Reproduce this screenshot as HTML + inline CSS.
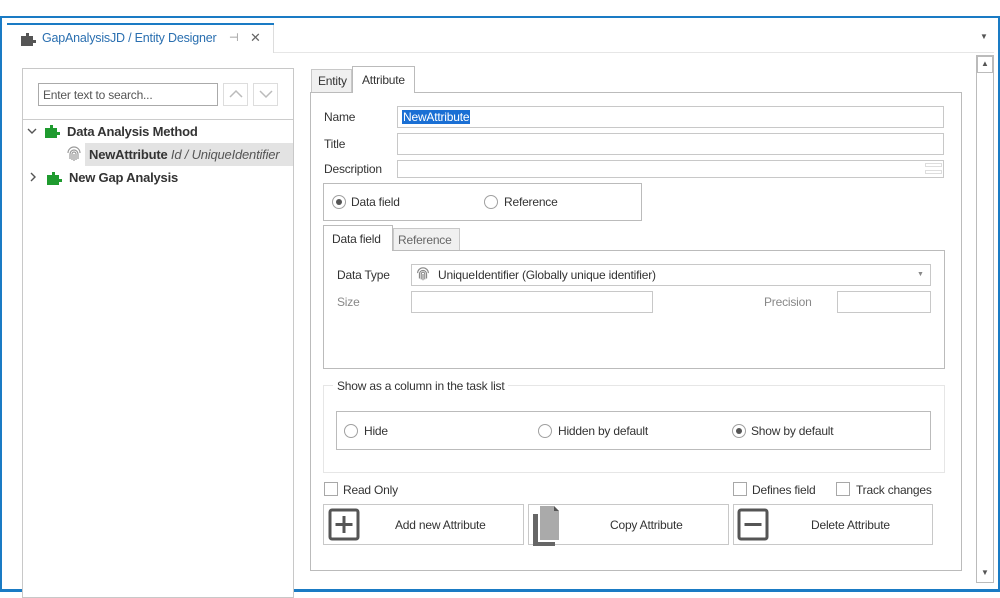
<!DOCTYPE html>
<html><head><meta charset="utf-8"><style>
*{box-sizing:border-box;margin:0;padding:0}
body{width:1000px;height:592px;background:#fff;position:relative;overflow:hidden;font-family:"Liberation Sans",sans-serif;font-size:12px;color:#333}
.a{position:absolute}
.bx{position:absolute;border:1px solid #c8c8c8;background:#fff}
.t{position:absolute;white-space:nowrap;letter-spacing:-0.2px}
.rad{position:absolute;width:14px;height:14px;border:1px solid #a0a0a0;border-radius:50%;background:#fff}
.rad.on::after{content:"";position:absolute;left:3px;top:3px;width:6px;height:6px;border-radius:50%;background:#555}
.chk{position:absolute;width:14px;height:14px;border:1px solid #a8a8a8;background:#fff}
.btn{position:absolute;border:1px solid #c8c8c8;background:#fff;height:41px;top:504px}
</style></head><body>
<div class="a" style="left:0;top:16px;width:1000px;height:576px;border:2px solid #1a7bc4;border-bottom-width:3px"></div>
<div class="a" style="left:7px;top:23px;width:267px;height:2px;background:#1a7bc4"></div>
<div class="a" style="left:273px;top:25px;width:1px;height:28px;background:#ddd"></div>
<div class="a" style="left:274px;top:52px;width:720px;height:1px;background:#e6e6e6"></div>
<svg class="a" style="left:20px;top:31px" width="18" height="16" viewBox="0 0 18 16"><path d="M1 5h5V2h3v3h4v4h3v3h-3v3H1z" fill="#555"/></svg>
<div class="t" style="left:42px;top:31px;color:#2a6fb0;font-size:12.5px">GapAnalysisJD / Entity Designer</div>
<div class="t" style="left:229px;top:31px;color:#888;font-size:11px">⊣</div>
<div class="t" style="left:250px;top:30px;color:#666;font-size:13px">✕</div>
<div class="t" style="left:980px;top:32px;color:#555;font-size:8px">▼</div>
<div class="bx" style="left:22px;top:68px;width:272px;height:530px"></div>
<div class="bx" style="left:38px;top:83px;width:180px;height:23px;border-color:#aaa"></div>
<div class="t" style="left:43px;top:88px;color:#555">Enter text to search...</div>
<div class="bx" style="left:223px;top:83px;width:25px;height:23px;border-color:#ddd"></div>
<div class="bx" style="left:253px;top:83px;width:25px;height:23px;border-color:#ddd"></div>
<svg class="a" style="left:228px;top:89px" width="16" height="10"><path d="M2 8l6-6 6 6" stroke="#bbb" stroke-width="1.5" fill="none"/></svg>
<svg class="a" style="left:258px;top:89px" width="16" height="10"><path d="M2 2l6 6 6-6" stroke="#bbb" stroke-width="1.5" fill="none"/></svg>
<div class="a" style="left:23px;top:119px;width:270px;height:1px;background:#ccc"></div>
<svg class="a" style="left:27px;top:126px" width="10" height="10"><path d="M1 3l4 4 4-4" stroke="#555" stroke-width="1.4" fill="none"/></svg>
<svg class="a" style="left:43px;top:123px" width="20" height="16" viewBox="0 0 18 16"><path d="M1 5h5V2h3v3h4v4h3v3h-3v3H1z" fill="#1f9b2f"/></svg>
<div class="t" style="left:67px;top:124px;font-weight:bold;color:#333;font-size:13px">Data Analysis Method</div>
<div class="a" style="left:85px;top:143px;width:208px;height:23px;background:#e3e3e3"></div>
<svg class="a" style="left:65px;top:145px" width="18" height="18" viewBox="0 0 18 18" fill="none" stroke="#999" stroke-width="1.2"><path d="M3 8a6 6 0 0 1 12 0M5 14V9a4 4 0 0 1 8 0v5M7 15V9a2 2 0 0 1 4 0v6M9 9v7"/></svg>
<div class="t" style="left:89px;top:147px;font-weight:bold;font-size:13px">NewAttribute <i style="font-weight:normal;color:#555">Id / UniqueIdentifier</i></div>
<svg class="a" style="left:28px;top:172px" width="10" height="10"><path d="M3 1l4 4-4 4" stroke="#555" stroke-width="1.4" fill="none"/></svg>
<svg class="a" style="left:45px;top:170px" width="20" height="16" viewBox="0 0 18 16"><path d="M1 5h5V2h3v3h4v4h3v3h-3v3H1z" fill="#1f9b2f"/></svg>
<div class="t" style="left:69px;top:170px;font-weight:bold;font-size:13px">New Gap Analysis</div>
<div class="bx" style="left:976px;top:55px;width:18px;height:528px;border-color:#bbb"></div>
<div class="bx" style="left:977px;top:56px;width:16px;height:17px;border-color:#bbb"></div>
<div class="t" style="left:981px;top:59px;font-size:8px;color:#555">▲</div>
<div class="t" style="left:981px;top:568px;font-size:8px;color:#555">▼</div>
<div class="bx" style="left:311px;top:69px;width:41px;height:24px;background:#f0f0f0"></div>
<div class="t" style="left:318px;top:74px">Entity</div>
<div class="bx" style="left:310px;top:92px;width:652px;height:479px;border-color:#bbb"></div>
<div class="bx" style="left:352px;top:66px;width:63px;height:27px;border-color:#bbb;border-bottom:none"></div>
<div class="t" style="left:362px;top:73px">Attribute</div>
<div class="t" style="left:324px;top:110px">Name</div>
<div class="bx" style="left:397px;top:106px;width:547px;height:22px"></div>
<div class="t" style="left:402px;top:110px;background:#1a6fd4;color:#fff;padding:0 1px">NewAttribute</div>
<div class="t" style="left:324px;top:137px">Title</div>
<div class="bx" style="left:397px;top:133px;width:547px;height:22px"></div>
<div class="t" style="left:324px;top:162px">Description</div>
<div class="bx" style="left:397px;top:160px;width:547px;height:18px"></div>
<div class="a" style="left:925px;top:163px;width:17px;height:4px;border:1px solid #ddd"></div>
<div class="a" style="left:925px;top:170px;width:17px;height:4px;border:1px solid #ddd"></div>
<div class="bx" style="left:323px;top:183px;width:319px;height:38px;border-color:#bbb"></div>
<div class="rad on" style="left:332px;top:195px"></div>
<div class="t" style="left:351px;top:195px">Data field</div>
<div class="rad" style="left:484px;top:195px"></div>
<div class="t" style="left:504px;top:195px">Reference</div>
<div class="bx" style="left:393px;top:228px;width:67px;height:23px;background:#f0f0f0"></div>
<div class="t" style="left:398px;top:233px;color:#666">Reference</div>
<div class="bx" style="left:323px;top:250px;width:622px;height:119px;border-color:#bbb"></div>
<div class="bx" style="left:323px;top:225px;width:70px;height:26px;border-color:#bbb;border-bottom:none"></div>
<div class="t" style="left:332px;top:232px">Data field</div>
<div class="t" style="left:337px;top:268px">Data Type</div>
<div class="bx" style="left:411px;top:264px;width:520px;height:22px"></div>
<svg class="a" style="left:415px;top:266px" width="16" height="16" viewBox="0 0 18 18" fill="none" stroke="#888" stroke-width="1.3"><path d="M3 8a6 6 0 0 1 12 0M5 14V9a4 4 0 0 1 8 0v5M7 15V9a2 2 0 0 1 4 0v6M9 9v7"/></svg>
<div class="t" style="left:438px;top:268px">UniqueIdentifier (Globally unique identifier)</div>
<div class="t" style="left:917px;top:271px;font-size:7px;color:#888">▼</div>
<div class="t" style="left:337px;top:295px;color:#888">Size</div>
<div class="bx" style="left:411px;top:291px;width:242px;height:22px"></div>
<div class="t" style="left:764px;top:295px;color:#888">Precision</div>
<div class="bx" style="left:837px;top:291px;width:94px;height:22px"></div>
<div class="bx" style="left:323px;top:385px;width:622px;height:88px;border-color:#e6e6e6"></div>
<div class="t" style="left:333px;top:379px;background:#fff;padding:0 4px">Show as a column in the task list</div>
<div class="bx" style="left:336px;top:411px;width:595px;height:39px;border-color:#bbb"></div>
<div class="rad" style="left:344px;top:424px"></div>
<div class="t" style="left:364px;top:424px">Hide</div>
<div class="rad" style="left:538px;top:424px"></div>
<div class="t" style="left:558px;top:424px">Hidden by default</div>
<div class="rad on" style="left:732px;top:424px"></div>
<div class="t" style="left:751px;top:424px">Show by default</div>
<div class="chk" style="left:324px;top:482px"></div>
<div class="t" style="left:343px;top:483px">Read Only</div>
<div class="chk" style="left:733px;top:482px"></div>
<div class="t" style="left:752px;top:483px">Defines field</div>
<div class="chk" style="left:836px;top:482px"></div>
<div class="t" style="left:856px;top:483px">Track changes</div>
<div class="btn" style="left:323px;width:201px"></div>
<svg class="a" style="left:328px;top:508px" width="34" height="34"><rect x="2" y="2" width="28" height="29" rx="2" fill="none" stroke="#555" stroke-width="3"/><path d="M16 8v17M7.5 16.5h17" stroke="#555" stroke-width="3"/></svg>
<div class="t" style="left:395px;top:518px">Add new Attribute</div>
<div class="btn" style="left:528px;width:201px"></div>
<svg class="a" style="left:531px;top:506px" width="40" height="40"><path d="M2 8v32h22v-4H7V8z" fill="#666"/><path d="M9 0h14l5 5v29H9z" fill="#aaa"/><path d="M23 0v5h5z" fill="#555"/></svg>
<div class="t" style="left:610px;top:518px">Copy Attribute</div>
<div class="btn" style="left:733px;width:200px"></div>
<svg class="a" style="left:737px;top:508px" width="34" height="34"><rect x="2" y="2" width="28" height="29" rx="2" fill="none" stroke="#555" stroke-width="3"/><path d="M7.5 16.5h17" stroke="#555" stroke-width="3"/></svg>
<div class="t" style="left:811px;top:518px">Delete Attribute</div>
</body></html>
